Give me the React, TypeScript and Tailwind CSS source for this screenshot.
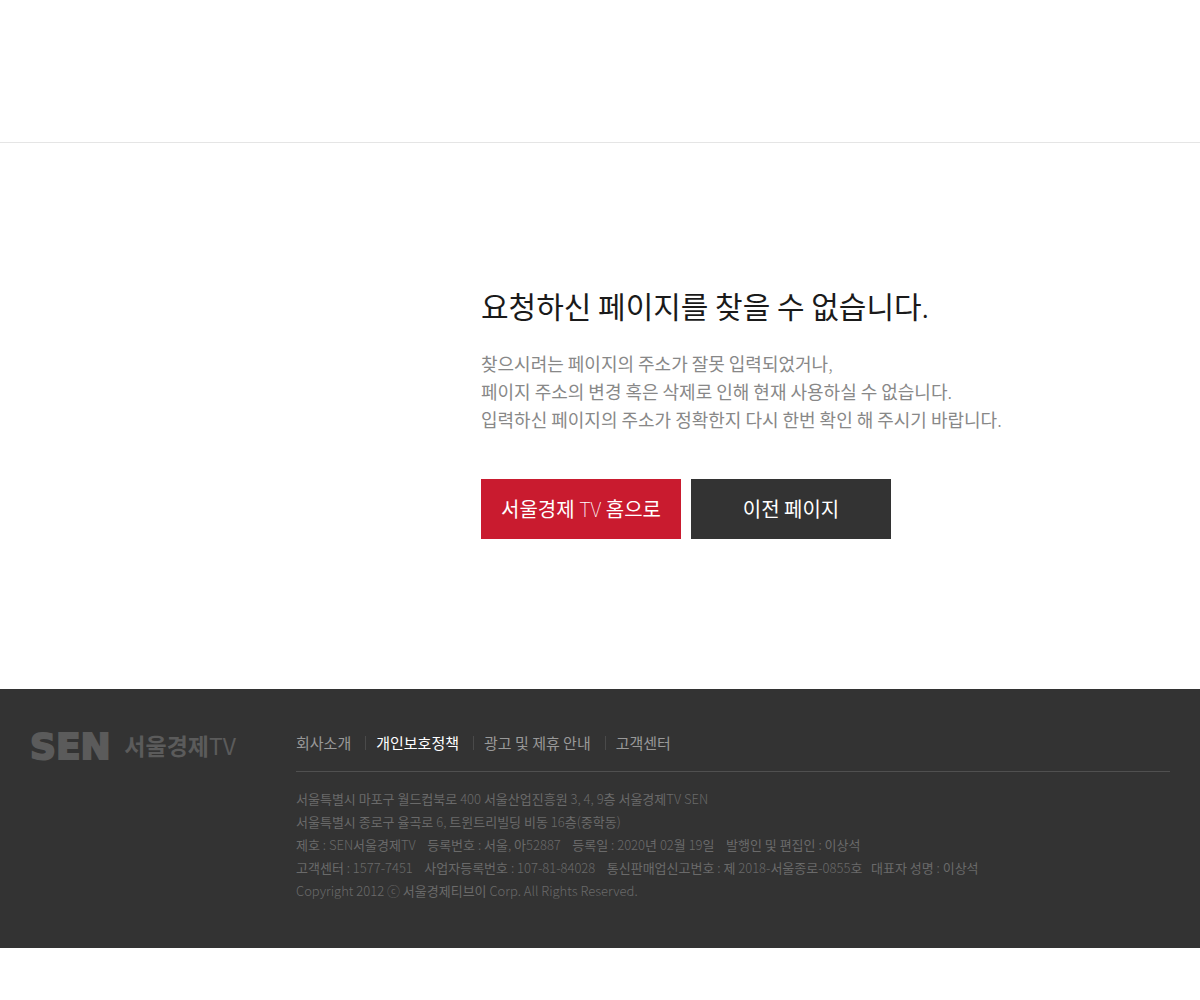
import React from 'react';

interface FooterLink {
  label: string;
  strong?: boolean;
}

const footerLinks: FooterLink[] = [
  { label: '회사소개' },
  { label: '개인보호정책', strong: true },
  { label: '광고 및 제휴 안내' },
  { label: '고객센터' },
];

const companyInfo: string[] = [
  '서울특별시 마포구 월드컵북로 400 서울산업진흥원 3, 4, 9층 서울경제TV SEN',
  '서울특별시 종로구 율곡로 6, 트윈트리빌딩 비동 16층(중학동)',
  '제호 : SEN서울경제TV \u00a0\u00a0 등록번호 : 서울, 아52887 \u00a0\u00a0 등록일 : 2020년 02월 19일 \u00a0\u00a0 발행인 및 편집인 : 이상석',
  '고객센터 : 1577-7451 \u00a0\u00a0 사업자등록번호 : 107-81-84028 \u00a0\u00a0 통신판매업신고번호 : 제 2018-서울종로-0855호 \u00a0 대표자 성명 : 이상석',
  'Copyright 2012 ⓒ 서울경제티브이 Corp. All Rights Reserved.',
];

// Hangul is set in regular weight, Latin letters, digits and punctuation in a lighter one
const MixedText: React.FC<{ text: string }> = ({ text }) => (
  <>
    {text.split(/([가-힣]+)/).map((part, i) =>
      i % 2 === 1 ? <span key={i} className="font-normal">{part}</span> : part
    )}
  </>
);

const Logo: React.FC = () => (
  <a href="#" aria-label="SEN 서울경제TV" className="flex h-7 w-[206px] shrink-0 items-center justify-between whitespace-nowrap text-[#5b5b5b]">
    <span className="font-['DejaVu_Sans',sans-serif] text-4xl leading-7 font-bold [-webkit-text-stroke:2px_#5b5b5b]">SEN</span>
    <span className="self-start text-[23px] leading-6 font-bold">
      서울경제<span className="font-normal">TV</span>
    </span>
  </a>
);

const NotFound: React.FC = () => (
  <main className="mx-auto max-w-[1040px] px-6 pt-[140px] pb-[150px] md:pr-0 md:pl-[401px]">
    <h1 className="text-[30px] leading-11 font-light text-[#1a1a1a]">
      <MixedText text="요청하신 페이지를 찾을 수 없습니다." />
    </h1>
    <p className="mt-[22px] text-lg leading-7 font-light text-[#888]">
      <MixedText text="찾으시려는 페이지의 주소가 잘못 입력되었거나," />
      <br />
      <MixedText text="페이지 주소의 변경 혹은 삭제로 인해 현재 사용하실 수 없습니다." />
      <br />
      <MixedText text="입력하신 페이지의 주소가 정확한지 다시 한번 확인 해 주시기 바랍니다." />
    </p>
    <div className="mt-[46px] flex flex-wrap gap-2.5 text-xl text-white">
      <a href="#" className="flex h-15 w-50 items-center justify-center bg-[#c91b2f]">
        <span>서울경제 <span className="font-thin">TV</span> 홈으로</span>
      </a>
      <button type="button" onClick={() => window.history.back()} className="h-15 w-50 bg-[#333]">
        이전 페이지
      </button>
    </div>
  </main>
);

const Footer: React.FC = () => (
  <footer className="flex flex-wrap gap-x-15 gap-y-6 bg-[#333] px-7.5 pt-11 pb-[46px] md:flex-nowrap">
    <Logo />
    <div className="min-w-0 grow">
      <nav className="flex items-center border-b border-[#505050] pb-[18px] text-[15px] leading-5 text-[#999]">
        {footerLinks.map((link, i) => (
          <React.Fragment key={link.label}>
            {i > 0 && <span className="mr-2.5 ml-3.5 h-3.5 w-px bg-[#4a4a4a]" />}
            <a href="#" className={link.strong ? 'text-white' : ''}>{link.label}</a>
          </React.Fragment>
        ))}
      </nav>
      <div className="pt-[15px] text-[13px] leading-[23px] font-light text-[#6a6a6a]">
        {companyInfo.map((line) => (
          <p key={line}><MixedText text={line} /></p>
        ))}
      </div>
    </div>
  </footer>
);

const App: React.FC = () => (
  <div className="bg-white font-['Noto_Sans_CJK_KR',sans-serif]">
    <header className="h-[143px] border-b border-[#e5e5e5]" />
    <NotFound />
    <Footer />
  </div>
);

export default App;
